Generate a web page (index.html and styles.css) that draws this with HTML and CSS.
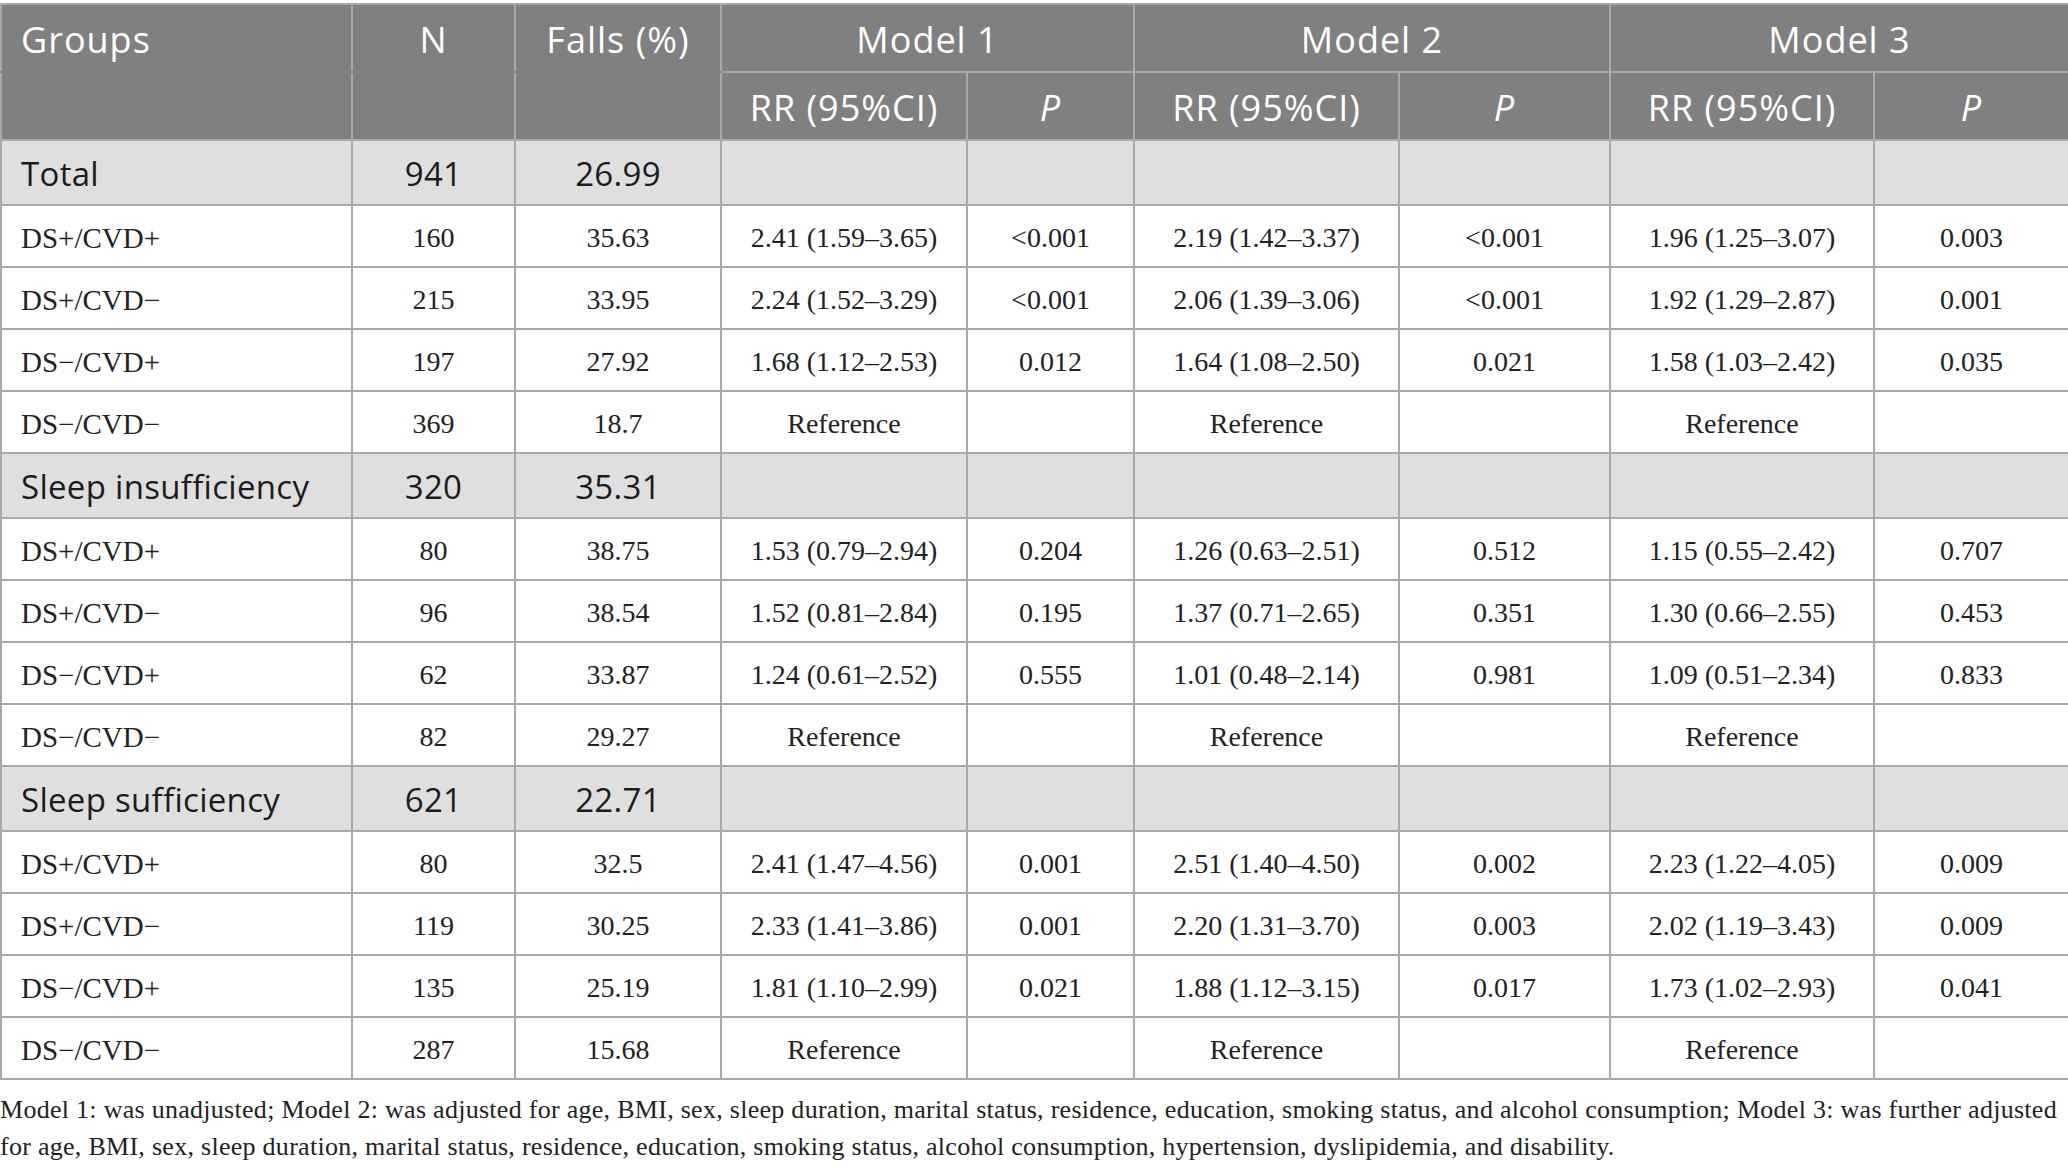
FILE: index.html
```html
<!DOCTYPE html>
<html>
<head>
<meta charset="utf-8">
<link rel="stylesheet" href="styles.css">
</head>
<body>
<table class="tbl">
<colgroup>
<col style="width:351px"><col style="width:163px"><col style="width:206px"><col style="width:246px"><col style="width:167px"><col style="width:265px"><col style="width:211px"><col style="width:264px"><col style="width:195px">
</colgroup>
<thead>
<tr class="h1">
<th class="left">Groups</th><th>N</th><th>Falls (%)</th><th colspan="2">Model 1</th><th colspan="2">Model 2</th><th colspan="2">Model 3</th>
</tr>
<tr class="h2">
<th></th><th></th><th></th><th>RR (95%CI)</th><th><i>P</i></th><th>RR (95%CI)</th><th><i>P</i></th><th>RR (95%CI)</th><th><i>P</i></th>
</tr>
</thead>
<tbody>
<tr class="grp"><td class="left">Total</td><td>941</td><td>26.99</td><td></td><td></td><td></td><td></td><td></td><td></td></tr>
<tr class="row"><td class="left">DS+/CVD+</td><td>160</td><td>35.63</td><td>2.41 (1.59–3.65)</td><td>&lt;0.001</td><td>2.19 (1.42–3.37)</td><td>&lt;0.001</td><td>1.96 (1.25–3.07)</td><td>0.003</td></tr>
<tr class="row"><td class="left">DS+/CVD−</td><td>215</td><td>33.95</td><td>2.24 (1.52–3.29)</td><td>&lt;0.001</td><td>2.06 (1.39–3.06)</td><td>&lt;0.001</td><td>1.92 (1.29–2.87)</td><td>0.001</td></tr>
<tr class="row"><td class="left">DS−/CVD+</td><td>197</td><td>27.92</td><td>1.68 (1.12–2.53)</td><td>0.012</td><td>1.64 (1.08–2.50)</td><td>0.021</td><td>1.58 (1.03–2.42)</td><td>0.035</td></tr>
<tr class="row"><td class="left">DS−/CVD−</td><td>369</td><td>18.7</td><td>Reference</td><td></td><td>Reference</td><td></td><td>Reference</td><td></td></tr>
<tr class="grp"><td class="left">Sleep insufficiency</td><td>320</td><td>35.31</td><td></td><td></td><td></td><td></td><td></td><td></td></tr>
<tr class="row"><td class="left">DS+/CVD+</td><td>80</td><td>38.75</td><td>1.53 (0.79–2.94)</td><td>0.204</td><td>1.26 (0.63–2.51)</td><td>0.512</td><td>1.15 (0.55–2.42)</td><td>0.707</td></tr>
<tr class="row"><td class="left">DS+/CVD−</td><td>96</td><td>38.54</td><td>1.52 (0.81–2.84)</td><td>0.195</td><td>1.37 (0.71–2.65)</td><td>0.351</td><td>1.30 (0.66–2.55)</td><td>0.453</td></tr>
<tr class="row"><td class="left">DS−/CVD+</td><td>62</td><td>33.87</td><td>1.24 (0.61–2.52)</td><td>0.555</td><td>1.01 (0.48–2.14)</td><td>0.981</td><td>1.09 (0.51–2.34)</td><td>0.833</td></tr>
<tr class="row"><td class="left">DS−/CVD−</td><td>82</td><td>29.27</td><td>Reference</td><td></td><td>Reference</td><td></td><td>Reference</td><td></td></tr>
<tr class="grp"><td class="left">Sleep sufficiency</td><td>621</td><td>22.71</td><td></td><td></td><td></td><td></td><td></td><td></td></tr>
<tr class="row"><td class="left">DS+/CVD+</td><td>80</td><td>32.5</td><td>2.41 (1.47–4.56)</td><td>0.001</td><td>2.51 (1.40–4.50)</td><td>0.002</td><td>2.23 (1.22–4.05)</td><td>0.009</td></tr>
<tr class="row"><td class="left">DS+/CVD−</td><td>119</td><td>30.25</td><td>2.33 (1.41–3.86)</td><td>0.001</td><td>2.20 (1.31–3.70)</td><td>0.003</td><td>2.02 (1.19–3.43)</td><td>0.009</td></tr>
<tr class="row"><td class="left">DS−/CVD+</td><td>135</td><td>25.19</td><td>1.81 (1.10–2.99)</td><td>0.021</td><td>1.88 (1.12–3.15)</td><td>0.017</td><td>1.73 (1.02–2.93)</td><td>0.041</td></tr>
<tr class="row"><td class="left">DS−/CVD−</td><td>287</td><td>15.68</td><td>Reference</td><td></td><td>Reference</td><td></td><td>Reference</td><td></td></tr>
</tbody>
</table>
<p class="note">Model 1: was unadjusted; Model 2: was adjusted for age, BMI, sex, sleep duration, marital status, residence, education, smoking status, and alcohol consumption; Model 3: was further adjusted<br>for age, BMI, sex, sleep duration, marital status, residence, education, smoking status, alcohol consumption, hypertension, dyslipidemia, and disability.</p>
</body>
</html>
```

FILE: styles.css
```css
html, body {
  margin: 0;
  padding: 0;
  background: #ffffff;
}
body {
  padding-top: 3px;
}
.tbl {
  border-collapse: collapse;
  table-layout: fixed;
  width: 2068px;
}
.tbl th, .tbl td {
  border: 2px solid #a9a9a9;
  padding: 0;
  text-align: center;
  vertical-align: middle;
  white-space: nowrap;
}
.tbl th {
  background: #7f807f;
  color: #ffffff;
  font-family: "Open Sans", sans-serif;
  font-weight: 400;
  font-size: 36px;
  letter-spacing: 1px;
  padding-top: 2px;
}
.tbl .h1 { height: 68px; }
.tbl .h2 { height: 68px; }
.tbl thead .h1 th:nth-child(-n+3) { border-bottom-color: #7f807f; }
.tbl thead .h2 th:nth-child(-n+3) { border-top-color: #7f807f; }
.tbl .left {
  text-align: left;
  padding-left: 19px;
}
.grp { height: 65px; }
.grp td {
  background: #e0dfe0;
  color: #1c1c1c;
  font-family: "Open Sans", sans-serif;
  font-size: 33px;
  letter-spacing: 0.3px;
  padding-top: 2px;
}
.row { height: 62px; }
.row td {
  background: #ffffff;
  color: #222222;
  font-family: "Liberation Serif", "Times New Roman", serif;
  font-size: 28px;
  padding-top: 4px;
}
.row td.left {
  font-size: 29px;
}
.note {
  margin: 11px 0 0 0;
  font-family: "Liberation Serif", "Times New Roman", serif;
  font-size: 26px;
  letter-spacing: 0.28px;
  line-height: 37px;
  color: #222222;
  white-space: nowrap;
}
```
